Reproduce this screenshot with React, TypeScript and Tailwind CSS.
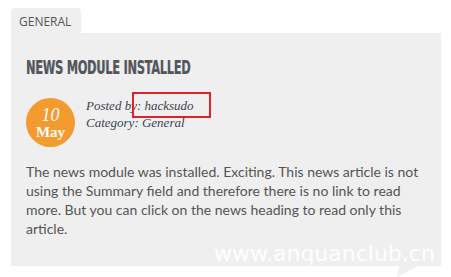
import React from 'react';

export default function App() {
  return (
    <div className="relative w-[451px] h-[277px] overflow-hidden bg-white pl-[11px] pt-[8px]">
      {/* Tab */}
      <div className="flex h-[25px] w-[70px] items-center rounded-t-[4px] bg-[#efefef] pl-[8px] pt-[2px] text-[12px] text-[#555] font-['Open_Sans',sans-serif]">
        GENERAL
      </div>

      {/* Panel */}
      <div className="h-[233px] w-[430px] bg-[#efefef] pl-[15px] pr-[10px] pt-[25px]">
        <h2 className="origin-left scale-x-[0.66] whitespace-nowrap text-[19px] font-black leading-[19px] tracking-[-0.3px] text-[#555] font-['DejaVu_Sans_Condensed','DejaVu_Sans',sans-serif] [text-shadow:1px_0_0_rgba(70,110,170,0.45)]">
          NEWS MODULE INSTALLED
        </h2>

        <div className="mt-[21px] flex items-start gap-[11px]">
          <div className="flex h-[49px] w-[49px] shrink-0 flex-col items-center justify-center rounded-full bg-[#f39b2f] text-white font-['Liberation_Serif',serif]">
            <span className="text-[18px] italic leading-[18px]">10</span>
            <span className="text-[15px] font-bold leading-[16px]">May</span>
          </div>
          <div className="-mt-[1px] text-[13px] italic leading-[17px] text-[#3f4450] font-['Liberation_Serif',serif]">
            <div>Posted by: hacksudo</div>
            <div>Category: General</div>
          </div>
        </div>

        <p className="mt-[15px] text-[14px] leading-[19px] text-[#555] font-['Lato',sans-serif]">
          The news module was installed. Exciting. This news article is not using the Summary field and therefore there is no link to read more. But you can click on the news heading to read only this article.
        </p>
      </div>

      {/* Annotation box */}
      <div className="absolute left-[132px] top-[92px] h-[26px] w-[79px] border-2 border-[#e3202a]" />

      {/* Watermark */}
      <div className="absolute left-[214px] top-[242px] whitespace-nowrap text-[22px] leading-[24px] text-white/90 font-['DejaVu_Sans',sans-serif]">
        www.anquanclub.cn
      </div>
      <svg className="absolute left-[395px] top-[266px]" width="24" height="11" viewBox="0 0 24 11">
        <polygon points="4,0 23,0 2,11" fill="#f0f0f0" />
      </svg>
    </div>
  );
}
